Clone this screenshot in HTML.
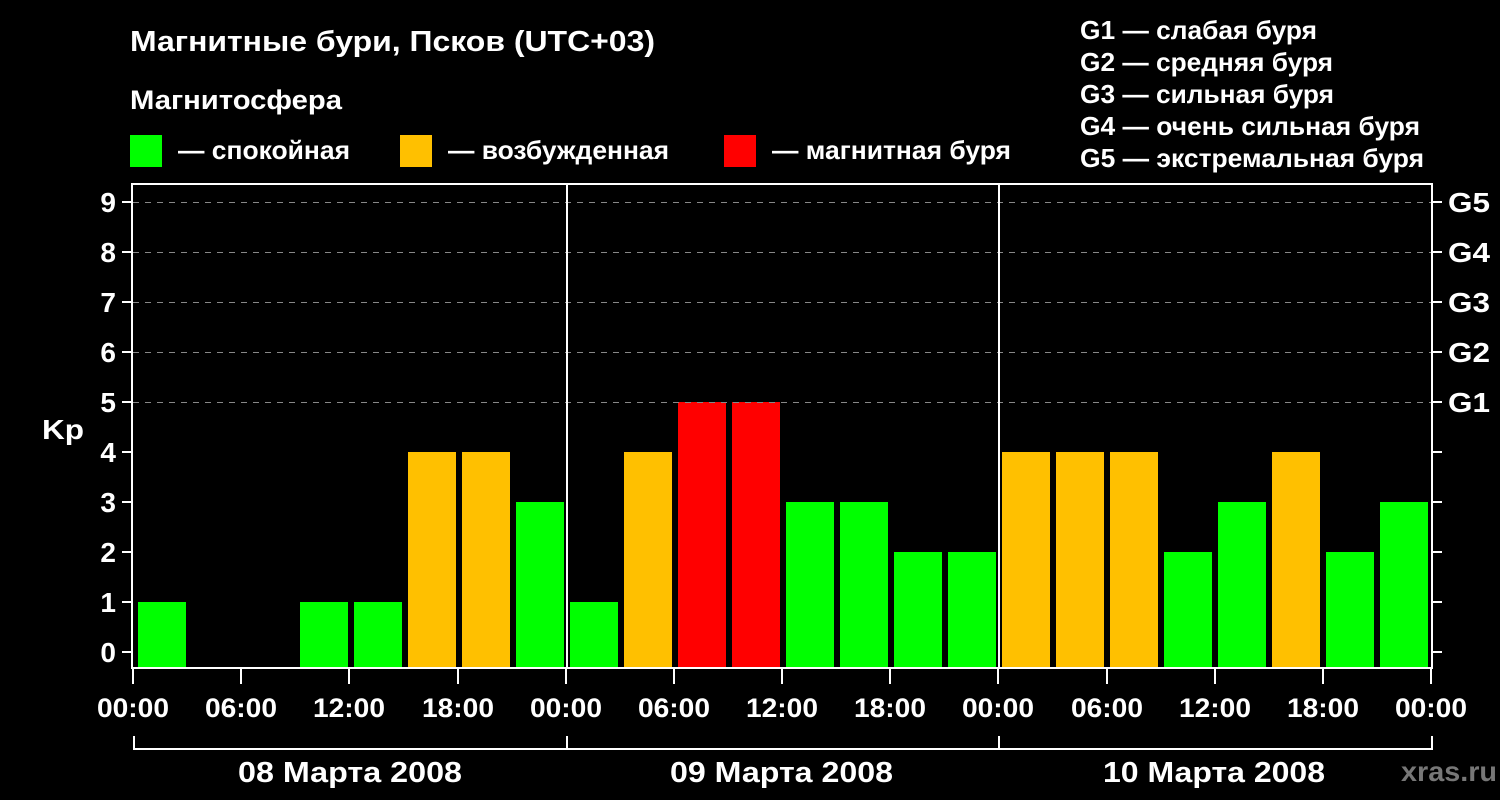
<!DOCTYPE html>
<html><head><meta charset="utf-8"><style>
html,body{margin:0;padding:0;background:#000;width:1500px;height:800px;overflow:hidden}
svg{display:block}
text{font-family:"Liberation Sans",Arial,sans-serif;font-weight:bold;fill:#fff}
</style></head><body>
<svg width="1500" height="800" xmlns="http://www.w3.org/2000/svg">
<text x="130" y="51" font-size="29" textLength="525" lengthAdjust="spacingAndGlyphs">Магнитные бури, Псков (UTC+03)</text>
<text x="130" y="109" font-size="27" textLength="212" lengthAdjust="spacingAndGlyphs">Магнитосфера</text>
<rect x="130" y="135" width="32" height="32" fill="#00ff00"/>
<text x="178" y="159" font-size="26" textLength="172" lengthAdjust="spacingAndGlyphs">— спокойная</text>
<rect x="400" y="135" width="32" height="32" fill="#ffc000"/>
<text x="448" y="159" font-size="26" textLength="221" lengthAdjust="spacingAndGlyphs">— возбужденная</text>
<rect x="724" y="135" width="32" height="32" fill="#ff0000"/>
<text x="772" y="159" font-size="26" textLength="239" lengthAdjust="spacingAndGlyphs">— магнитная буря</text>
<g font-size="26">
<text x="1080" y="39" textLength="237" lengthAdjust="spacingAndGlyphs">G1 — слабая буря</text>
<text x="1080" y="71" textLength="253" lengthAdjust="spacingAndGlyphs">G2 — средняя буря</text>
<text x="1080" y="103" textLength="254" lengthAdjust="spacingAndGlyphs">G3 — сильная буря</text>
<text x="1080" y="135" textLength="340" lengthAdjust="spacingAndGlyphs">G4 — очень сильная буря</text>
<text x="1080" y="167" textLength="344" lengthAdjust="spacingAndGlyphs">G5 — экстремальная буря</text>
</g>
<g>
<rect x="138" y="602" width="48" height="66" fill="#00ff00"/>
<rect x="300" y="602" width="48" height="66" fill="#00ff00"/>
<rect x="354" y="602" width="48" height="66" fill="#00ff00"/>
<rect x="408" y="452" width="48" height="216" fill="#ffc000"/>
<rect x="462" y="452" width="48" height="216" fill="#ffc000"/>
<rect x="516" y="502" width="48" height="166" fill="#00ff00"/>
<rect x="570" y="602" width="48" height="66" fill="#00ff00"/>
<rect x="624" y="452" width="48" height="216" fill="#ffc000"/>
<rect x="678" y="402" width="48" height="266" fill="#ff0000"/>
<rect x="732" y="402" width="48" height="266" fill="#ff0000"/>
<rect x="786" y="502" width="48" height="166" fill="#00ff00"/>
<rect x="840" y="502" width="48" height="166" fill="#00ff00"/>
<rect x="894" y="552" width="48" height="116" fill="#00ff00"/>
<rect x="948" y="552" width="48" height="116" fill="#00ff00"/>
<rect x="1002" y="452" width="48" height="216" fill="#ffc000"/>
<rect x="1056" y="452" width="48" height="216" fill="#ffc000"/>
<rect x="1110" y="452" width="48" height="216" fill="#ffc000"/>
<rect x="1164" y="552" width="48" height="116" fill="#00ff00"/>
<rect x="1218" y="502" width="48" height="166" fill="#00ff00"/>
<rect x="1272" y="452" width="48" height="216" fill="#ffc000"/>
<rect x="1326" y="552" width="48" height="116" fill="#00ff00"/>
<rect x="1380" y="502" width="48" height="166" fill="#00ff00"/>
</g>
<g stroke="#888" stroke-dasharray="6,6" stroke-width="1">
<line x1="133" y1="202.5" x2="1432" y2="202.5"/>
<line x1="133" y1="252.5" x2="1432" y2="252.5"/>
<line x1="133" y1="302.5" x2="1432" y2="302.5"/>
<line x1="133" y1="352.5" x2="1432" y2="352.5"/>
<line x1="133" y1="402.5" x2="1432" y2="402.5"/>
</g>
<g stroke="#fff" stroke-width="2" fill="none">
<rect x="132" y="184" width="1300" height="484"/>
<line x1="567" y1="184" x2="567" y2="668"/>
<line x1="999" y1="184" x2="999" y2="668"/>
<path d="M134 736V749H1432V736M567 736V749M999 736V749"/>
<path d="M122 652H132M122 602H132M122 552H132M122 502H132M122 452H132M122 402H132M122 352H132M122 302H132M122 252H132M122 202H132"/>
<path d="M1432 652H1442M1432 602H1442M1432 552H1442M1432 502H1442M1432 452H1442M1432 402H1442M1432 352H1442M1432 302H1442M1432 252H1442M1432 202H1442"/>
<path d="M133 668V684M241 668V684M349 668V684M458 668V684M566 668V684M674 668V684M782 668V684M890 668V684M998 668V684M1107 668V684M1215 668V684M1323 668V684M1431 668V684"/>
</g>
<g font-size="28" text-anchor="end">
<text x="116" y="662">0</text><text x="116" y="612">1</text><text x="116" y="562">2</text><text x="116" y="512">3</text><text x="116" y="462">4</text><text x="116" y="412">5</text><text x="116" y="362">6</text><text x="116" y="312">7</text><text x="116" y="262">8</text><text x="116" y="212">9</text>
</g>
<g font-size="28">
<text x="1448" y="212" textLength="42" lengthAdjust="spacingAndGlyphs">G5</text><text x="1448" y="262" textLength="42" lengthAdjust="spacingAndGlyphs">G4</text><text x="1448" y="312" textLength="42" lengthAdjust="spacingAndGlyphs">G3</text><text x="1448" y="362" textLength="42" lengthAdjust="spacingAndGlyphs">G2</text><text x="1448" y="412" textLength="42" lengthAdjust="spacingAndGlyphs">G1</text>
</g>
<g font-size="27">
<text x="97" y="717" textLength="72" lengthAdjust="spacingAndGlyphs">00:00</text>
<text x="205" y="717" textLength="72" lengthAdjust="spacingAndGlyphs">06:00</text>
<text x="313" y="717" textLength="72" lengthAdjust="spacingAndGlyphs">12:00</text>
<text x="422" y="717" textLength="72" lengthAdjust="spacingAndGlyphs">18:00</text>
<text x="530" y="717" textLength="72" lengthAdjust="spacingAndGlyphs">00:00</text>
<text x="638" y="717" textLength="72" lengthAdjust="spacingAndGlyphs">06:00</text>
<text x="746" y="717" textLength="72" lengthAdjust="spacingAndGlyphs">12:00</text>
<text x="854" y="717" textLength="72" lengthAdjust="spacingAndGlyphs">18:00</text>
<text x="962" y="717" textLength="72" lengthAdjust="spacingAndGlyphs">00:00</text>
<text x="1071" y="717" textLength="72" lengthAdjust="spacingAndGlyphs">06:00</text>
<text x="1179" y="717" textLength="72" lengthAdjust="spacingAndGlyphs">12:00</text>
<text x="1287" y="717" textLength="72" lengthAdjust="spacingAndGlyphs">18:00</text>
<text x="1395" y="717" textLength="72" lengthAdjust="spacingAndGlyphs">00:00</text>
</g>
<text x="42" y="439" font-size="28" textLength="42" lengthAdjust="spacingAndGlyphs">Kp</text>
<g font-size="29">
<text x="238" y="782" textLength="224" lengthAdjust="spacingAndGlyphs">08 Марта 2008</text>
<text x="670" y="782" textLength="223" lengthAdjust="spacingAndGlyphs">09 Марта 2008</text>
<text x="1103" y="782" textLength="222" lengthAdjust="spacingAndGlyphs">10 Марта 2008</text>
</g>
<text x="1401" y="781" font-size="28" style="fill:#777" textLength="96" lengthAdjust="spacingAndGlyphs">xras.ru</text>
</svg>
</body></html>
